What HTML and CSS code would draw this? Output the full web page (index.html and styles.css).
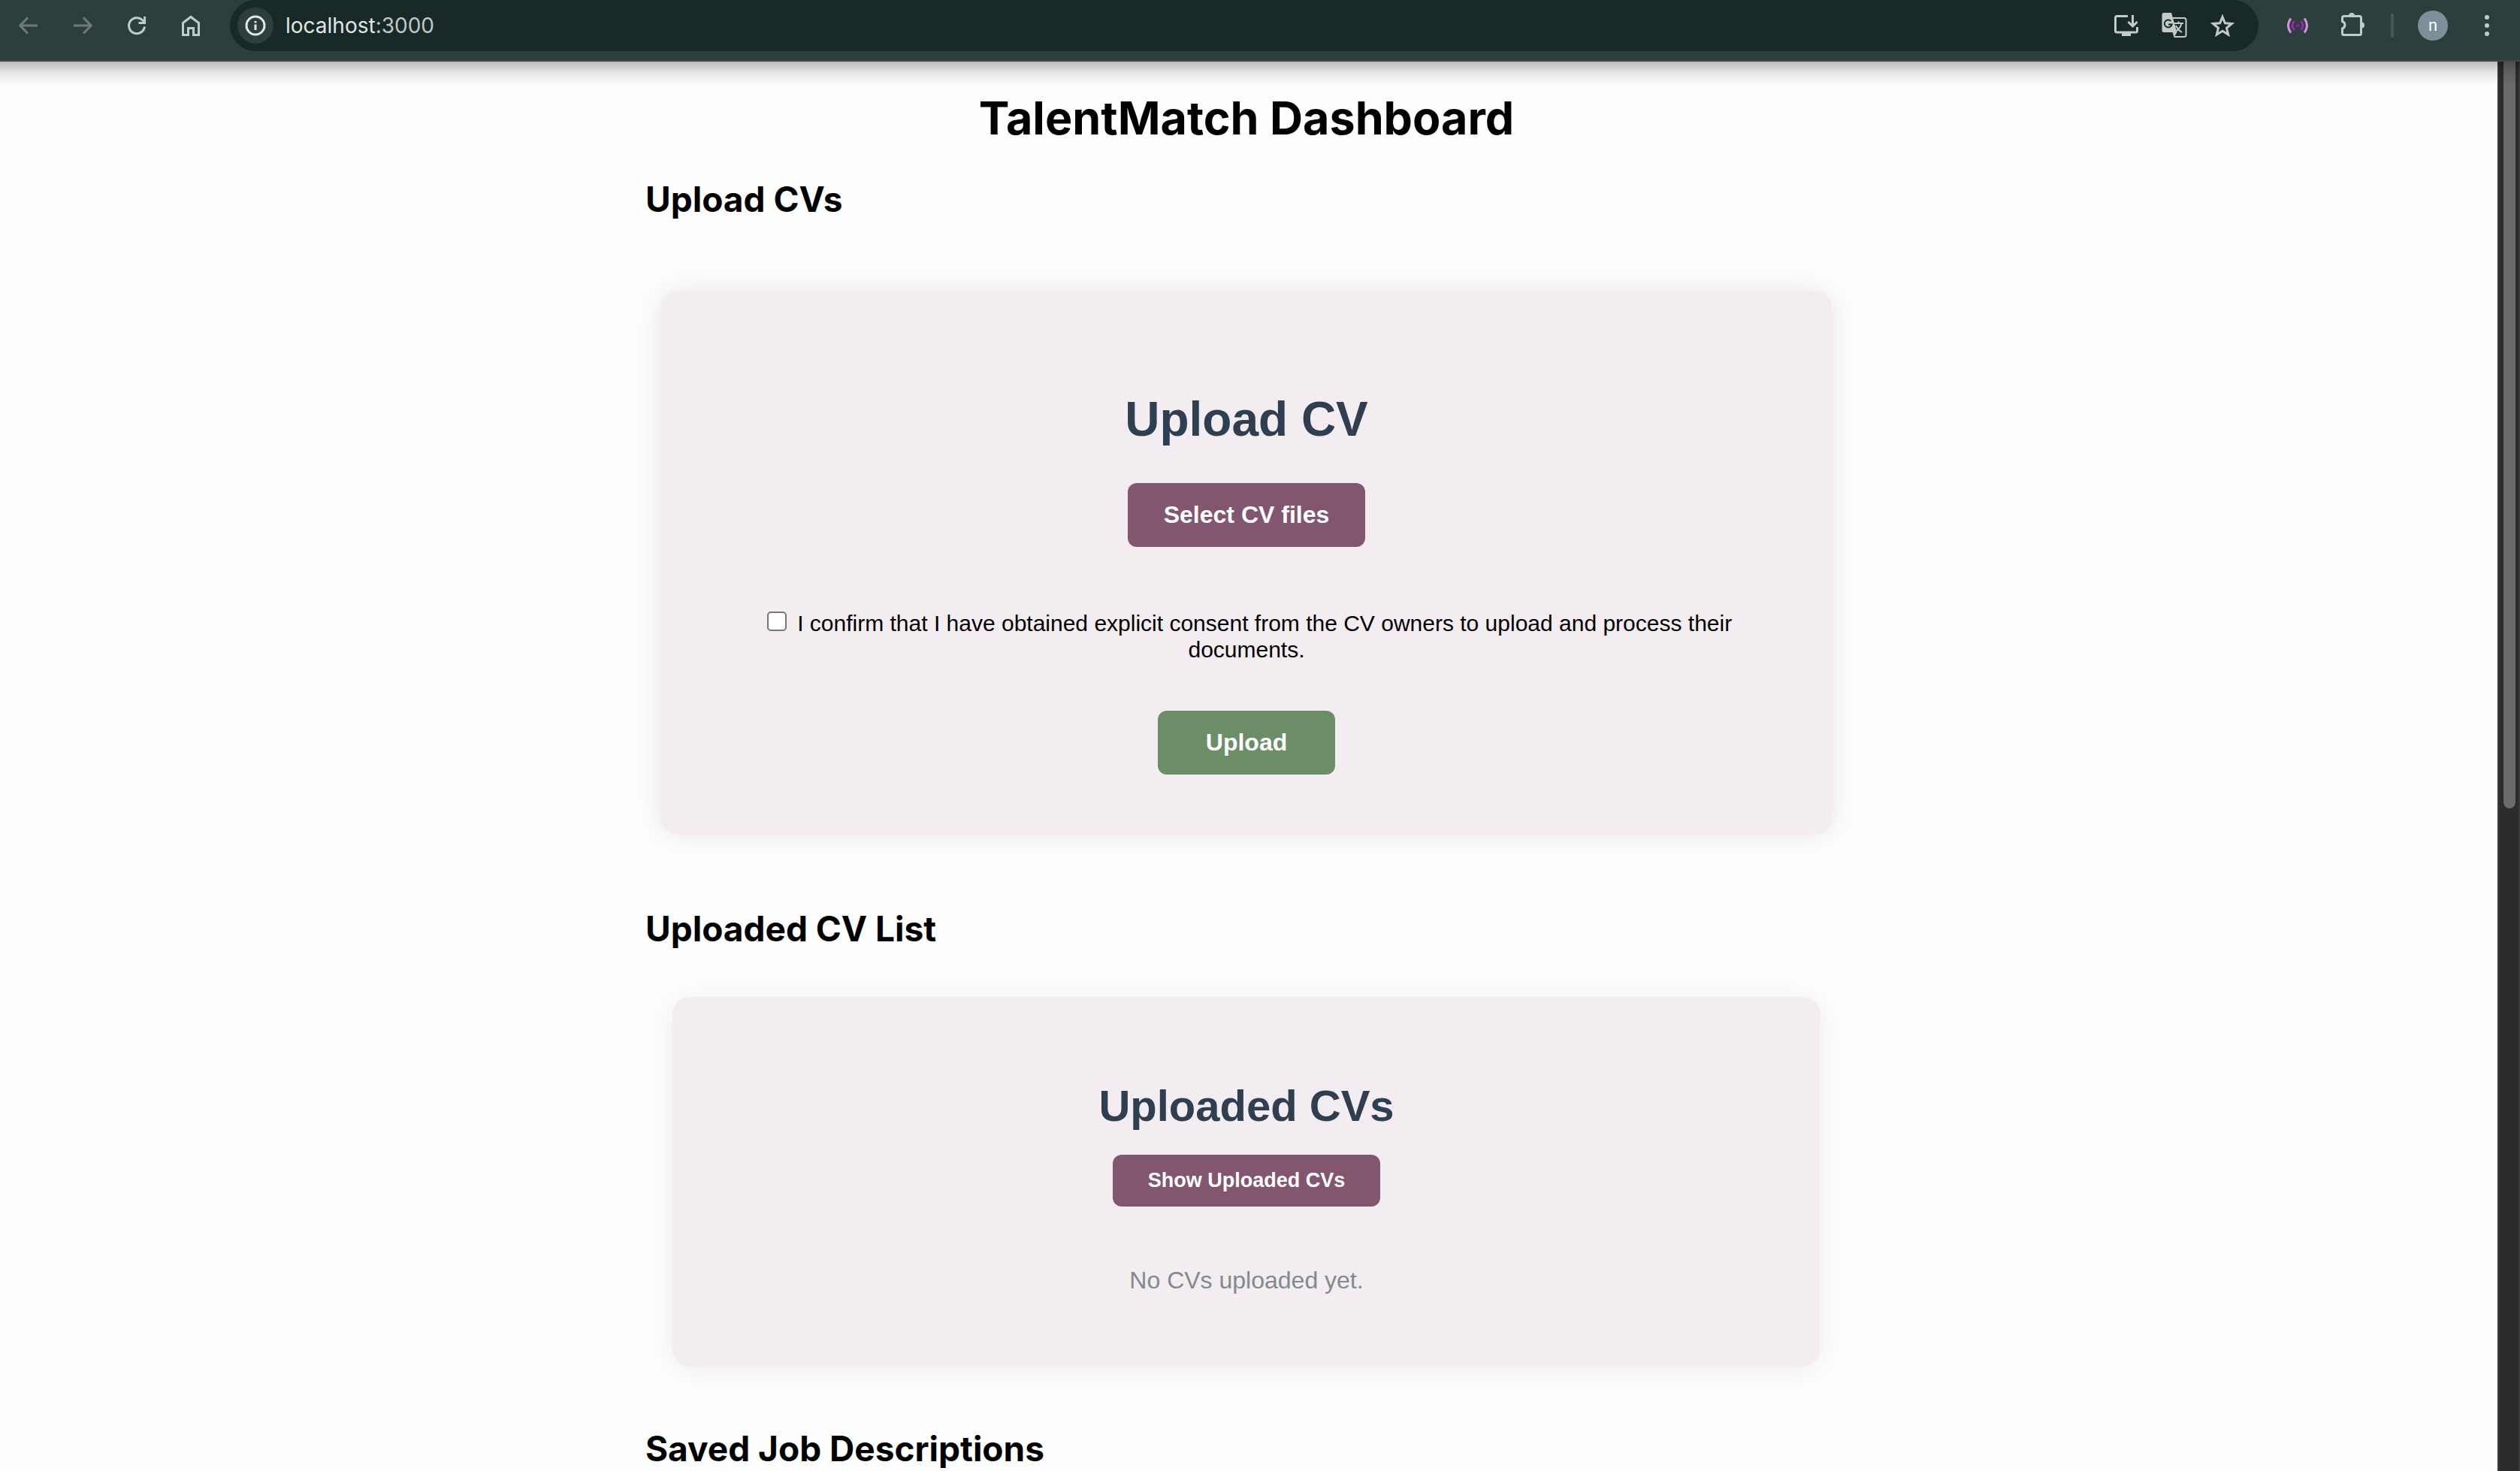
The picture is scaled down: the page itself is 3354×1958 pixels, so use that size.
FILE: index.html
```html
<!DOCTYPE html>
<html lang="en">
<head>
<meta charset="utf-8">
<title>TalentMatch Dashboard</title>
<link rel="stylesheet" href="styles.css">
</head>
<body>
<header class="toolbar">
  <nav class="nav">
    <button class="icon-btn dim" aria-label="Back"><svg width="28" height="28" viewBox="0 0 28 28"><path d="M26 14H3M13 3.500 2.800 14 13 24.500"/></svg></button>
    <button class="icon-btn dim" aria-label="Forward"><svg width="28" height="28" viewBox="0 0 28 28"><path d="M2 14h23M15 3.500 25.200 14 15 24.500"/></svg></button>
    <button class="icon-btn" aria-label="Reload"><svg width="28" height="28" viewBox="0 0 28 28"><path d="M24.500 15.500A10.500 10.500 0 1 1 21.600 6.800L24.500 9.500M24.600 2v8.500H16.500"/></svg></button>
    <button class="icon-btn" aria-label="Home"><svg width="28" height="28" viewBox="0 0 28 28"><path d="M3.500 10.500 14 2.500l10.500 8V26.500H17.500V17.500h-7v9h-7z"/></svg></button>
  </nav>
  <div class="address">
    <button class="info" aria-label="Site information"><svg width="28" height="28" viewBox="0 0 28 28"><circle cx="14" cy="14" r="12"/><path d="M14 12.500V20M14 8v2.500"/></svg></button>
    <div class="url">localhost<span class="port">:3000</span></div>
    <button class="icon-btn pale" aria-label="Install"><svg width="32" height="32" viewBox="0 0 32 32"><path d="M18 3.500H3.500a2 2 0 0 0-2 2V23a2 2 0 0 0 2 2h25a2 2 0 0 0 2-2V18M24.500 2v14M18.500 11l6 6 6-6"/><path class="solid" d="M10 25h12v5H10z"/></svg></button>
    <button class="icon-btn pale" aria-label="Translate"><svg width="34" height="34" viewBox="0 0 34 34"><path class="solid" d="M3 0h10l2 7h0l5.500 19H3a2.500 2.500 0 0 1-2.500-2.500v-21A2.500 2.500 0 0 1 3 0z"/><path class="thin" d="M15 7h15a2.500 2.500 0 0 1 2.500 2.500v20A2.500 2.500 0 0 1 30 32H17.500l-2-6M17 14h12M22.500 11.500V14M26.500 14c-1 5-4 8.500-8 11M19 17c2 4 4.500 7 8 9"/><path class="g" d="M12.500 11a5 5 0 1 0 1.200 4.500H9"/><path class="solid" d="m16 26 4.500 0-3 5z"/></svg></button>
    <button class="icon-btn pale" aria-label="Bookmark"><svg width="32" height="32" viewBox="0 0 32 32"><path d="m16 4.500 3.400 8.300 9 .7-6.900 5.800 2.200 8.700L16 23.300 8.300 28l2.200-8.700-6.900-5.800 9-.7z"/></svg></button>
  </div>
  <div class="extras">
    <button class="icon-btn" aria-label="Signal"><svg width="28" height="28" viewBox="0 0 28 28"><path class="lilac" d="M5 4.500q-7 9.500 0 19M23 4.500q7 9.500 0 19"/><path class="violet" d="M9.500 8q-5 6 0 12M18.500 8q5 6 0 12"/><circle class="dot" cx="14" cy="14" r="2.600"/></svg></button>
    <button class="icon-btn puzzle" aria-label="Extensions"><svg width="34" height="34" viewBox="0 0 34 34"><path d="M4.500 6.500h21a2 2 0 0 1 2 2v21a2 2 0 0 1-2 2h-21a2 2 0 0 1-2-2v-6.500a5 5 0 0 0 0-9.500V8.500a2 2 0 0 1 2-2z"/><path class="solid" d="M11 6a4 4 0 0 1 8 0zM28 14.500a4 4 0 0 1 0 8z"/></svg></button>
    <span class="divider"></span>
    <button class="avatar">n</button>
    <button class="icon-btn" aria-label="Menu"><svg width="8" height="30" viewBox="0 0 8 30"><g class="solid"><circle cx="4" cy="4" r="3"/><circle cx="4" cy="15" r="3"/><circle cx="4" cy="26" r="3"/></g></svg></button>
  </div>
</header>
<div class="viewport">
  <main class="page">
    <div class="container">
      <h1 class="title">TalentMatch Dashboard</h1>
      <section>
        <h2 class="section-title">Upload CVs</h2>
        <form class="card upload-card">
          <h2 class="card-title">Upload CV</h2>
          <button class="btn" type="button">Select CV files</button>
          <label class="consent"><input class="check" type="checkbox"> I confirm that I have obtained explicit consent from the CV owners to upload and process their documents.</label>
          <button class="btn btn-green" type="button">Upload</button>
        </form>
      </section>
      <section>
        <h2 class="section-title">Uploaded CV List</h2>
        <div class="card list-card">
          <h2 class="card-title">Uploaded CVs</h2>
          <button class="btn btn-small" type="button">Show Uploaded CVs</button>
          <p class="empty">No CVs uploaded yet.</p>
        </div>
      </section>
      <section>
        <h2 class="section-title">Saved Job Descriptions</h2>
      </section>
    </div>
  </main>
  <div class="scrollbar"><div class="thumb"></div></div>
  <div class="edge-shadow"></div>
</div>
</body>
</html>
```
FILE: styles.css
```css
* { box-sizing: border-box; }
body {
  margin: 0;
  height: 100vh;
  display: flex;
  flex-direction: column;
  overflow: hidden;
  background: #fff;
  color: #000;
  font-family: "Liberation Sans", Arial, sans-serif;
}
h1, h2, p { margin: 0; }
button { margin: 0; padding: 0; border: 0; background: none; font: inherit; color: inherit; }
svg { display: block; fill: none; stroke: currentColor; stroke-width: 3; }
.solid { fill: currentColor; stroke: none; }

/* browser toolbar */
.toolbar {
  flex: none;
  display: flex;
  align-items: flex-start;
  background: #2d3e3c;
  border-bottom: 2px solid #474742;
  height: 82px;
}
.nav, .extras, .address { display: flex; align-items: center; height: 68px; }
.nav { gap: 44px; padding: 0 38px 0 24px; }
.icon-btn { color: #b9cfcc; }
.dim { color: #6d7c79; }
.pale { color: #c5cac8; }
.address {
  flex: 1;
  gap: 31px;
  padding: 0 32px 0 10px;
  border-radius: 34px;
  background: #182927;
}
.info {
  display: grid;
  place-items: center;
  width: 48px;
  height: 48px;
  border-radius: 50%;
  background: #2d3e3c;
  color: #e1e6e4;
}
.url {
  flex: 1;
  margin-left: -15px;
  font: 28px/34px Inter, sans-serif;
  color: #e1e6e4;
}
.port { color: #c1c7c5; }
.thin { stroke-width: 2; }
.g { stroke: #182927; stroke-width: 2; }
.extras { padding: 0 40px 0 38px; }
.lilac { stroke: #cf93dc; }
.violet { stroke: #9c27b0; }
.dot { fill: #7b1fa2; stroke: none; }
.puzzle { margin: 0 33px 4px 43px; }
.divider { width: 4px; height: 32px; border-radius: 2px; background: #465755; }
.avatar {
  width: 40px;
  height: 40px;
  margin: 0 48px 0 32px;
  border-radius: 50%;
  background: #7e8f9c;
  color: #fff;
  font: 22px/40px Roboto, sans-serif;
}

/* page */
.viewport { position: relative; flex: 1; min-height: 0; display: flex; }
.page { flex: 1; overflow: hidden; padding: 37px 6px 0 0; background: #fefefe; }
.container { max-width: 1600px; margin: 0 auto; }
.title {
  margin-bottom: 41px;
  text-align: center;
  font: 700 61px/76px Inter, sans-serif;
}
.section-title { font: 700 46px/58px Inter, sans-serif; }
.card {
  display: flex;
  flex-direction: column;
  align-items: center;
  border-radius: 24px;
  background: #f3ecf0;
}
.upload-card {
  margin: 94px 20px 96px;
  padding: 134px 100px 80px;
  box-shadow: 0 0 40px rgba(0, 0, 0, 0.1);
}
.list-card {
  margin: 62px 36px 80px;
  padding: 112px 100px 96px;
  box-shadow: 0 4px 40px rgba(0, 0, 0, 0.08);
}
.card-title {
  margin-bottom: 49px;
  color: #2f3e50;
  font-size: 64px;
  line-height: 72px;
}
.list-card .card-title { margin-bottom: 32px; font-size: 58px; line-height: 66px; }
.btn {
  padding: 24px 48px;
  border-radius: 12px;
  background: #82566f;
  color: #fff;
  font-size: 32px;
  font-weight: 700;
  line-height: 37px;
}
.btn-green { padding: 24px 64px; background: #6c8e67; }
.btn-small { padding: 20px 47px; font-size: 27px; line-height: 29px; }
.consent {
  margin: 84px 0 64px;
  text-align: center;
  font-size: 30px;
  line-height: 35px;
}
.check {
  appearance: none;
  width: 26px;
  height: 26px;
  margin: 0 6px 0 8px;
  border: 2px solid #767676;
  border-radius: 5px;
  background: #fff;
  vertical-align: baseline;
}
.empty { margin-top: 80px; color: #7f8c8d; font-size: 32px; line-height: 37px; }

.scrollbar {
  flex: none;
  width: 30px;
  padding: 0 4px 0 6px;
  border: solid #3a3a3a;
  border-width: 0 2px;
  background: #2c2c2c;
}
.thumb { width: 16px; height: 53%; border-radius: 0 0 8px 8px; background: #6b6b6b; }
.edge-shadow {
  position: absolute;
  inset: 0 0 auto;
  height: 32px;
  background: linear-gradient(rgba(0, 0, 0, 0.27), rgba(0, 0, 0, 0.1) 45%, transparent);
  pointer-events: none;
}
```
